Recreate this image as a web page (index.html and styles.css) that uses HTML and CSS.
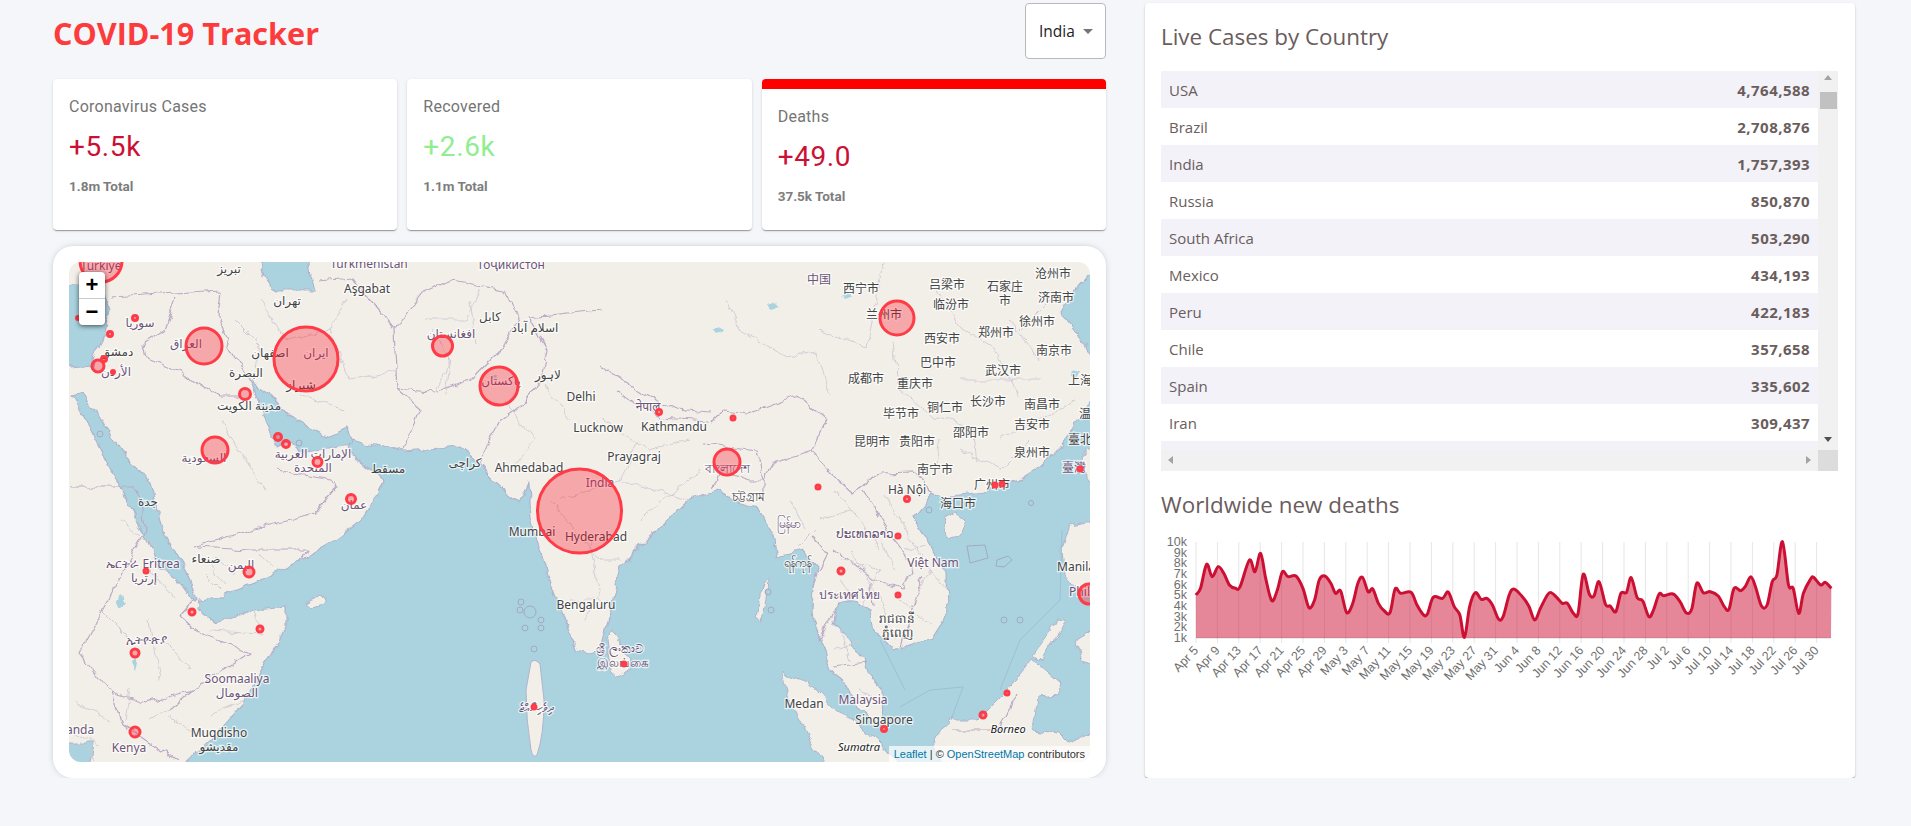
FILE: index.html
```html
<!DOCTYPE html>
<html lang="en">
<head>
  <meta charset="UTF-8">
  <title>COVID-19 Tracker</title>
  <link rel="stylesheet" href="styles.css">
</head>
<body>
  <div class="app">
    <div class="app-left">
      <div class="app-header">
        <h1>COVID-19 Tracker</h1>
        <div class="country-select">India <span class="select-arrow"></span></div>
      </div>

      <div class="app-stats">
        <div class="stat-card">
          <div class="stat-title">Coronavirus Cases</div>
          <div class="stat-number">+5.5k</div>
          <div class="stat-total">1.8m Total</div>
        </div>
        <div class="stat-card">
          <div class="stat-title">Recovered</div>
          <div class="stat-number stat-green">+2.6k</div>
          <div class="stat-total">1.1m Total</div>
        </div>
        <div class="stat-card stat-selected">
          <div class="stat-title">Deaths</div>
          <div class="stat-number">+49.0</div>
          <div class="stat-total">37.5k Total</div>
        </div>
      </div>

      <div class="map-card">
        <div class="map">
          <svg class="map-svg" viewBox="69 262 1021 500" width="1021" height="500">
            <defs>
              <filter id="rough" filterUnits="userSpaceOnUse" x="40" y="230" width="1080" height="560">
                <feTurbulence type="fractalNoise" baseFrequency="0.07" numOctaves="3" seed="7"/>
                <feDisplacementMap in="SourceGraphic" scale="9" xChannelSelector="R" yChannelSelector="G"/>
              </filter>
            </defs>
            <rect class="land" x="69" y="262" width="1021" height="500"/>

            <g filter="url(#rough)">
              <!-- seas -->
              <path class="water" d="M179 770L211 740L244 703L269 657L286 627L286 607L254 610L215 623L197 608L199 600L219 597L261 580L297 563L333 540L347 530L361 520L379 493L383 480L347 450L351 440L383 447L404 452L460 447L479 463L497 483L519 503L529 483L531 520L547 573L565 620L577 650L590 653L600 650L605 630L615 590L620 567L640 547L693 497L717 490L733 500L757 507L773 537L777 557L803 550L817 567L813 587L812 613L822 643L830 670L843 680L857 707L883 727L882 690L867 673L863 660L843 633L833 623L838 603L853 600L870 610L873 627L893 650L933 637L948 613L947 573L933 550L913 517L933 493L943 498L983 493L1033 473L1060 447L1083 413L1100 390L1100 770L905 770L880 743L830 770Z"/>
              <path class="water" d="M1100 262L1075 290L1062 313L1087 347L1100 367Z"/>
              <path class="water" d="M347 427L326 437L290 417L269 393L251 383L258 400L269 427L276 447L290 440L297 453L322 450L351 445Z"/>
              <path class="water" d="M72 395L94 437L122 490L144 535L160 568L183 585L195 602L197 600L183 565L165 535L147 478L119 450L97 412L82 392Z"/>
              <path class="water" d="M60 285L100 285L110 310L104 337L94 357L92 365L60 368Z"/>
              <path class="water" d="M258 255L265 283L277 290L315 290L311 277L308 255Z"/>
              <path class="water" d="M60 743L94 743L90 770L60 770Z"/>
              <path class="water thin" d="M118 600l6 -4l3 6l-5 4Z M131 663l3 -5l3 5l-2 8Z M256 405l4 -2l2 3l-4 3Z M490 372l8 3l-2 5l-5 -2Z M768 305l8 -3l3 6l-8 2Z M840 296l6 -5l4 5l-6 3Z M712 330l8 -3l3 5l-7 3Z M1073 370l8 2l-3 6l-6 -2Z"/>

              <!-- land sitting in the sea -->
              <path class="land-edge" d="M782 673L807 682L820 693L833 707L863 727L880 743L905 770L830 770L813 747L790 703Z"/>
              <path class="land-edge" d="M933 737L952 720L977 720L1007 690L1033 658L1062 683L1057 695L1038 697L1033 730L1057 733L1067 743L1100 730L1100 770L945 770L935 752Z"/>
              <path class="land-edge" d="M1070 525L1100 520L1100 595L1076 590L1065 575L1062 550Z"/>
              <path class="land-edge" d="M1033 655L1060 618L1067 620L1042 660Z"/>
              <path class="land-edge" d="M1075 640L1100 625L1100 665L1082 660Z"/>
              <path class="land-edge" d="M613 630L630 660L627 673L617 678L610 670L607 640Z"/>
              <path class="land-edge" d="M943 520L955 513L967 522L960 535L948 537Z"/>
              <path class="land-edge" d="M1084 450L1100 450L1100 487L1085 480Z"/>
              <path class="land-edge" d="M763 582L768 578L766 600L762 622L756 618Z"/>
              <path class="land-edge" d="M306 602L314 598L326 597L324 604L312 607Z"/>
            </g>

            <path class="land-edge" d="M531 662Q535 658 540 664L544 700Q544 735 537 755Q533 759 531 750Q526 720 526 690Z"/>
            <g class="atoll">
              <circle cx="521" cy="602" r="3"/><circle cx="520" cy="610" r="3"/><circle cx="530" cy="612" r="6"/>
              <circle cx="541" cy="620" r="3"/><circle cx="525" cy="628" r="3"/><circle cx="541" cy="628" r="3"/><circle cx="534" cy="649" r="3"/>
              <circle cx="100" cy="434" r="3"/><circle cx="299" cy="443" r="3"/><circle cx="768" cy="592" r="3"/><circle cx="771" cy="610" r="3"/>
              <path d="M967 546L985 545L988 558L970 563Z M997 560L1008 556L1012 560L1004 567L996 566Z"/>
              <circle cx="929" cy="510" r="3"/><circle cx="1031" cy="503" r="2.5"/><circle cx="1004" cy="620" r="3"/><circle cx="1020" cy="620" r="3"/>
            </g>
            <path class="sea-line" d="M900 707L930 690L963 687L951 720M880 640L905 690M1000 690L1020 640L1060 600L1062 530"/>

            <!-- country borders -->
            <g class="border" filter="url(#rough)">
              <path d="M147 357L183 373L219 397L240 397"/>
              <path d="M147 357L144 343L165 330L176 297"/>
              <path d="M219 317L229 347L245 373L251 383"/>
              <path d="M111 297L176 293L222 290L219 317"/>
              <path d="M394 330L397 390L419 410L404 450"/>
              <path d="M397 390L433 393L472 380L501 350L519 317L504 290"/>
              <path d="M394 330L422 293L451 280L504 290"/>
              <path d="M319 280L351 277L394 330"/>
              <path d="M479 463L497 423L519 407L540 383L547 350L529 317L600 310"/>
              <path d="M276 470L331 480L336 487L315 513L251 530L194 547"/>
              <path d="M69 487L136 487"/>
              <path d="M600 367L627 383L650 397L677 410L710 413"/>
              <path d="M713 420L723 410L750 413L797 395L827 420L813 450L827 470L853 493L880 473L913 472L933 493"/>
              <path d="M617 393L660 417L710 420"/>
              <path d="M703 443L757 450L763 480L750 480L720 470L713 487"/>
              <path d="M813 450L773 463L763 480L763 503"/>
              <path d="M813 537L827 553L817 573L813 587"/>
              <path d="M833 550L873 580L903 587L913 573L900 547L887 530L863 490"/>
              <path d="M870 583L872 607"/>
              <path d="M923 577L900 647"/>
              <path d="M115 587L79 653L111 693L147 703L194 690L249 653L190 627L179 617L194 600"/>
              <path d="M111 693L122 723L176 760"/>
              <path d="M169 710L194 690"/>
              <path d="M197 547L251 550L308 550L297 563"/>
              <path d="M838 603L820 640"/>
              <path d="M833 667L867 663"/>
              <path d="M953 730L1000 730L1017 693"/>
              <path d="M115 587L146 530L136 487"/>
            </g>
            <g class="border border-thin" filter="url(#rough)">
              <path d="M727 300L740 330L787 357L817 353L830 397"/>
              <path d="M817 330L867 347L883 263"/>
              <path d="M893 343L900 390L933 417L973 427L977 463"/>
              <path d="M1020 397L993 347L960 327L933 283"/>
              <path d="M211 630L261 633L254 610"/>
              <path d="M433 330L451 360L433 393"/>
              <path d="M470 300L476 345"/>
              <path d="M590 540L600 590L585 620"/>
              <path d="M560 500L620 480L640 440"/>
              <path d="M840 560L880 570L860 610"/>
              <path d="M905 530L930 570L915 600"/>
              <path d="M1000 440L1040 420L1075 400"/>
              <path d="M960 450L1000 470L1030 440"/>
              <path d="M220 420L265 490"/>
              <path d="M150 620L160 680"/>
              <path d="M205 560L225 585"/>
              <path d="M260 300L285 340L330 330L350 380"/>
              <path d="M330 330L345 300M350 380L395 370M300 395L345 410"/>
              <path d="M235 320L260 345L255 375"/>
              <path d="M425 320L465 320L480 290M445 395L450 355"/>
              <path d="M505 400L535 440L510 470M545 385L570 420"/>
              <path d="M600 420L650 450L690 440M620 480L690 500M640 520L700 470"/>
              <path d="M550 500L600 560L620 560M570 600L610 600"/>
              <path d="M840 580L855 600M850 550L880 600M880 540L895 570M905 550L925 545M860 520L880 550M885 495L905 530"/>
              <path d="M820 520L850 510M835 490L860 520M790 500L805 530M790 555L815 530"/>
              <path d="M930 570L947 590M900 600L930 625M880 600L895 640"/>
              <path d="M960 380L1040 380M1010 320L1040 360M1050 300L1020 330M940 440L935 470"/>
              <path d="M75 700L110 720M70 730L100 745M80 740L95 762M130 690L125 720M150 720L175 705"/>
              <path d="M120 520L160 550M100 610L130 640M165 640L190 670M150 570L175 600"/>
              <path d="M210 715L245 700M195 735L170 715"/>
              <path d="M205 575L220 590M215 555L235 575M260 555L275 565"/>
              <path d="M835 650L860 640M840 630L850 660M860 690L875 700"/>
            </g>

            <!-- place names -->
            <g class="labels">
              <text x="101" y="265" class="country">Türkiye</text>
              <text x="369" y="263" class="country">Türkmenistan</text>
              <text x="511" y="264" class="country">Тоҷикистон</text>
              <text x="229" y="268">تبريز</text>
              <text x="367" y="288">Aşgabat</text>
              <text x="287" y="300">تهران</text>
              <text x="140" y="322" class="country">سوريا</text>
              <text x="117" y="351">دمشق</text>
              <text x="116" y="371" class="country">الأردن</text>
              <text x="186" y="343" class="country">العراق</text>
              <text x="270" y="352">اصفهان</text>
              <text x="316" y="352" class="country">ايران</text>
              <text x="301" y="384">شيراز</text>
              <text x="246" y="372">البصرة</text>
              <text x="249" y="405">مدينة الكويت</text>
              <text x="204" y="457" class="country">السعودية</text>
              <text x="313" y="453" class="country">الإمارات العربية</text>
              <text x="313" y="467" class="country">المتحدة</text>
              <text x="388" y="468">مسقط</text>
              <text x="354" y="504" class="country">عمان</text>
              <text x="148" y="501">جدة</text>
              <text x="451" y="333" class="country">افغانستان</text>
              <text x="490" y="316">كابل</text>
              <text x="535" y="327">اسلام آباد</text>
              <text x="501" y="380" class="country">پاکستان</text>
              <text x="548" y="374">لاہور</text>
              <text x="581" y="396">Delhi</text>
              <text x="598" y="427">Lucknow</text>
              <text x="465" y="462">کراچی</text>
              <text x="529" y="467">Ahmedabad</text>
              <text x="532" y="531">Mumbai</text>
              <text x="600" y="482" class="country">India</text>
              <text x="596" y="536">Hyderabad</text>
              <text x="819" y="279" class="country">中国</text>
              <text x="861" y="288">西宁市</text>
              <text x="947" y="284">吕梁市</text>
              <text x="1005" y="286">石家庄</text>
              <text x="1005" y="300">市</text>
              <text x="1053" y="273">沧州市</text>
              <text x="1056" y="297">济南市</text>
              <text x="951" y="304">临汾市</text>
              <text x="884" y="314">兰州市</text>
              <text x="1037" y="321">徐州市</text>
              <text x="996" y="332">郑州市</text>
              <text x="942" y="338">西安市</text>
              <text x="1054" y="350">南京市</text>
              <text x="938" y="362">巴中市</text>
              <text x="1003" y="370">武汉市</text>
              <text x="1080" y="380">上海</text>
              <text x="866" y="378">成都市</text>
              <text x="915" y="383">重庆市</text>
              <text x="988" y="401">长沙市</text>
              <text x="1042" y="404">南昌市</text>
              <text x="945" y="407">铜仁市</text>
              <text x="901" y="413">毕节市</text>
              <text x="1085" y="413">温</text>
              <text x="1032" y="424">吉安市</text>
              <text x="971" y="432">邵阳市</text>
              <text x="872" y="441">昆明市</text>
              <text x="917" y="441">贵阳市</text>
              <text x="1080" y="439">臺北</text>
              <text x="1032" y="452">泉州市</text>
              <text x="935" y="469">南宁市</text>
              <text x="1074" y="467" class="country">臺灣</text>
              <text x="992" y="484">广州市</text>
              <text x="907" y="489">Hà Nội</text>
              <text x="958" y="503">海口市</text>
              <text x="648" y="406" class="country">नेपाल</text>
              <text x="674" y="426">Kathmandu</text>
              <text x="634" y="456">Prayagraj</text>
              <text x="727" y="468" class="country">বাংলাদেশ</text>
              <text x="748" y="496">চট্টগ্রাম</text>
              <text x="788" y="523" class="country">မြန်မာ</text>
              <text x="865" y="533" class="country">ປະເທດລາວ</text>
              <text x="797" y="562">ရန်ကုန်</text>
              <text x="933" y="562" class="country">Việt Nam</text>
              <text x="1076" y="566">Manila</text>
              <text x="1100" y="591" class="country">Philippines</text>
              <text x="849" y="594" class="country">ประเทศไทย</text>
              <text x="897" y="618">រាជធានី</text>
              <text x="897" y="632">ភ្នំពេញ</text>
              <text x="620" y="648" class="country">ශ්‍රී ලංකාව</text>
              <text x="623" y="662" class="country">இலங்கை</text>
              <text x="863" y="699" class="country">Malaysia</text>
              <text x="804" y="703">Medan</text>
              <text x="884" y="719">Singapore</text>
              <text x="1008" y="728" class="region">Borneo</text>
              <text x="859" y="746" class="region">Sumatra</text>
              <text x="586" y="604">Bengaluru</text>
              <text x="143" y="563" class="country">ኤርትራ Eritrea</text>
              <text x="144" y="577" class="country">إرتريا</text>
              <text x="206" y="558">صنعاء</text>
              <text x="241" y="564" class="country">اليمن</text>
              <text x="146" y="639" class="country">ኢትዮጵያ</text>
              <text x="237" y="678" class="country">Soomaaliya</text>
              <text x="237" y="692" class="country">الصومال</text>
              <text x="219" y="732">Muqdisho</text>
              <text x="219" y="746">مقديشو</text>
              <text x="129" y="747" class="country">Kenya</text>
              <text x="72" y="729" class="country">Uganda</text>
              <text x="536" y="707" class="country">ދިވެހިރާއްޖެ</text>
            </g>

            <!-- case circles -->
            <g class="cases">
              <circle cx="101" cy="261" r="21"/><circle cx="204" cy="346" r="18"/><circle cx="306" cy="359" r="32"/>
              <circle cx="442.500" cy="346" r="10"/><circle cx="499" cy="386" r="19"/><circle cx="215" cy="450" r="13"/>
              <circle cx="245" cy="394" r="5.500"/><circle cx="98" cy="366" r="6"/><circle cx="104" cy="359" r="2.500"/>
              <circle cx="113" cy="372" r="1.500"/><circle cx="110" cy="334" r="2.500"/><circle cx="135" cy="318" r="2.500"/>
              <circle cx="78" cy="318" r="1.500"/><circle cx="278" cy="437" r="3.500"/><circle cx="286" cy="444" r="3.500"/>
              <circle cx="317.500" cy="462" r="4.500"/><circle cx="351" cy="499" r="4.500"/><circle cx="579.500" cy="511" r="42"/>
              <circle cx="727" cy="462" r="13"/><circle cx="897" cy="318" r="17"/><circle cx="659" cy="412" r="2.500"/>
              <circle cx="733" cy="418" r="2"/><circle cx="818" cy="487" r="2"/><circle cx="907" cy="499" r="2.500"/>
              <circle cx="995" cy="485" r="2"/><circle cx="1002" cy="484" r="2"/><circle cx="1080" cy="469" r="2"/>
              <circle cx="898" cy="536" r="2"/><circle cx="249" cy="572" r="5"/><circle cx="146" cy="571" r="2"/>
              <circle cx="192" cy="612" r="3"/><circle cx="260" cy="629" r="3"/><circle cx="135" cy="653" r="4"/>
              <circle cx="135" cy="732" r="5"/><circle cx="534" cy="707" r="2"/><circle cx="841" cy="571" r="3"/>
              <circle cx="898" cy="595" r="2"/><circle cx="624" cy="664" r="2"/><circle cx="884" cy="729" r="2.500"/>
              <circle cx="1007" cy="693" r="2"/><circle cx="983" cy="715" r="3"/><circle cx="1089" cy="594" r="10"/>
            </g>
          </svg>

          <div class="zoom-control">
            <div class="zoom-btn">+</div>
            <div class="zoom-btn">−</div>
          </div>
          <div class="attribution"><a>Leaflet</a> | © <a>OpenStreetMap</a> contributors</div>
        </div>
      </div>
    </div>

    <div class="app-right">
      <h3>Live Cases by Country</h3>
      <div class="table-box">
        <div class="table-view">
          <table class="cases-table">
            <tr><td>USA</td><td><strong>4,764,588</strong></td></tr>
            <tr><td>Brazil</td><td><strong>2,708,876</strong></td></tr>
            <tr><td>India</td><td><strong>1,757,393</strong></td></tr>
            <tr><td>Russia</td><td><strong>850,870</strong></td></tr>
            <tr><td>South Africa</td><td><strong>503,290</strong></td></tr>
            <tr><td>Mexico</td><td><strong>434,193</strong></td></tr>
            <tr><td>Peru</td><td><strong>422,183</strong></td></tr>
            <tr><td>Chile</td><td><strong>357,658</strong></td></tr>
            <tr><td>Spain</td><td><strong>335,602</strong></td></tr>
            <tr><td>Iran</td><td><strong>309,437</strong></td></tr>
            <tr><td></td><td></td></tr>
          </table>
        </div>
        <div class="vbar">
          <span class="arrow-up"></span>
          <span class="vbar-thumb"></span>
          <span class="arrow-down"></span>
        </div>
        <div class="hbar">
          <span class="arrow-left"></span>
          <span class="arrow-right"></span>
        </div>
        <div class="bar-corner"></div>
      </div>
      <h3 class="chart-title">Worldwide new deaths</h3>
      <svg id="chart" class="chart" width="677" height="150"></svg>
    </div>
  </div>

  <script src="script.js"></script>
</body>
</html>
```

FILE: styles.css
```css
* {
  box-sizing: border-box;
}
body {
  margin: 0;
  background: #f5f6fa;
  font-family: Roboto, sans-serif;
  overflow: hidden;
}
.app {
  display: grid;
  grid-template-columns: 1053px 710px;
  gap: 39px;
  padding: 3px 56px 0 53px;
}

/* left side */
.app-header {
  display: flex;
  justify-content: space-between;
  height: 76px;
}
.app-header h1 {
  margin: 10px 0 0;
  font-family: "Open Sans", sans-serif;
  font-size: 30.6px;
  line-height: 40px;
  font-weight: 700;
  color: #fc3c3c;
}
.country-select {
  display: flex;
  align-items: center;
  gap: 8px;
  width: 81px;
  height: 56px;
  padding-left: 13px;
  background: #fff;
  border: 1px solid #b9b9b9;
  border-radius: 4px;
  font-family: "Open Sans", sans-serif;
  font-size: 15.5px;
  color: #222;
}
.select-arrow {
  border-left: 5px solid transparent;
  border-right: 5px solid transparent;
  border-top: 5px solid #757575;
}
.app-stats {
  display: grid;
  grid-template-columns: repeat(3, 1fr);
  gap: 10px;
  height: 151px;
}
.stat-card {
  padding: 16px;
  background: #fff;
  border-radius: 4px;
  box-shadow: 0 2px 1px -1px rgba(0,0,0,0.2), 0 1px 1px 0 rgba(0,0,0,0.14), 0 1px 3px 0 rgba(0,0,0,0.12);
}
.stat-selected {
  border-top: 10px solid #f00;
}
.stat-title {
  font-size: 16px;
  line-height: 24px;
  letter-spacing: 0.25px;
  color: #757575;
}
.stat-number {
  margin-top: 10px;
  font-size: 28px;
  line-height: 35px;
  letter-spacing: 0.6px;
  color: #cc1034;
}
.stat-green {
  color: #90ee90;
}
.stat-total {
  margin-top: 12px;
  font-size: 13.5px;
  line-height: 20px;
  font-weight: 700;
  color: #7d7d7d;
}
.map-card {
  margin-top: 16px;
  height: 532px;
  padding: 16px;
  background: #fff;
  border-radius: 20px;
  box-shadow: 0 0 8px -4px rgba(0,0,0,0.5);
}
.map {
  position: relative;
  height: 500px;
  overflow: hidden;
  border-radius: 12px;
}
.map-svg {
  display: block;
}
.land {
  fill: #f2efe9;
}
.land-edge {
  fill: #f2efe9;
  stroke: #afb4cc;
  stroke-width: 1;
}
.water {
  fill: #aad3df;
  stroke: #afb4cc;
  stroke-width: 1.2;
  stroke-linejoin: round;
}
.thin {
  stroke: none;
}
.atoll {
  fill: none;
  stroke: #a3a9c4;
  stroke-width: 1;
}
.sea-line {
  fill: none;
  stroke: #9fbfd3;
  stroke-width: 1;
}
.border {
  fill: none;
  stroke: #bba9c4;
  stroke-width: 1.2;
  stroke-linejoin: round;
}
.border-thin {
  stroke: #d0c8d2;
  stroke-width: 0.9;
}
.labels text {
  font-family: "Noto Sans", "DejaVu Sans", "Noto Sans CJK SC", sans-serif;
  font-size: 12px;
  fill: #444;
  text-anchor: middle;
  dominant-baseline: central;
  stroke: rgba(255,255,255,0.7);
  stroke-width: 2.5px;
  paint-order: stroke;
}
.labels .country {
  fill: #6d5577;
}
.labels .region {
  fill: #222;
  font-style: italic;
  font-size: 11px;
}
.cases circle {
  fill: rgba(255,20,40,0.33);
  stroke: #ff3b47;
  stroke-width: 3;
}
.zoom-control {
  position: absolute;
  top: 10px;
  left: 10px;
  width: 26px;
  border-radius: 4px;
  background: #fff;
  box-shadow: 0 1px 5px rgba(0,0,0,0.65);
}
.zoom-btn {
  height: 26px;
  font-family: "Liberation Sans", sans-serif;
  font-size: 22px;
  line-height: 26px;
  font-weight: 700;
  text-align: center;
  color: #000;
}
.zoom-btn + .zoom-btn {
  border-top: 1px solid #ccc;
  height: 27px;
}
.attribution {
  position: absolute;
  right: 0;
  bottom: 0;
  padding: 0 5px;
  background: rgba(255,255,255,0.7);
  font-family: "Liberation Sans", sans-serif;
  font-size: 11px;
  line-height: 16px;
  color: #333;
}
.attribution a {
  color: #0078a8;
}

/* right side */
.app-right {
  height: 775px;
  padding: 0 17px 0 16px;
  background: #fff;
  border-radius: 4px;
  box-shadow: 0 2px 2px -1px rgba(0,0,0,0.3), 0 1px 1px 0 rgba(0,0,0,0.14), 0 1px 3px 0 rgba(0,0,0,0.12);
}
.app-right h3 {
  margin: 0;
  padding-top: 17px;
  font-family: "Open Sans", sans-serif;
  font-size: 22.4px;
  line-height: 33px;
  height: 68px;
  font-weight: 400;
  color: #6a5d5d;
}
.table-box {
  display: grid;
  grid-template-columns: 657px 20px;
  grid-template-rows: 379px 21px;
}
.table-view {
  overflow: hidden;
}
.cases-table {
  width: 100%;
  border-collapse: collapse;
  font-family: "Open Sans", sans-serif;
  font-size: 15px;
  color: #6a5d5d;
}
.cases-table strong {
  letter-spacing: 0.45px;
}
.cases-table tr {
  height: 37px;
}
.cases-table tr:nth-child(odd) {
  background: #f3f2f8;
}
.cases-table td {
  padding: 0 8px;
}
.cases-table td:last-child {
  text-align: right;
}
.vbar {
  position: relative;
  background: #f1f1f1;
}
.vbar-thumb {
  position: absolute;
  top: 21px;
  left: 2px;
  width: 17px;
  height: 17px;
  background: #c1c1c1;
}
.arrow-up, .arrow-down, .arrow-left, .arrow-right {
  position: absolute;
  width: 0;
  height: 0;
  border: 4px solid transparent;
}
.arrow-up {
  top: 4px;
  left: 6px;
  border-bottom: 5px solid #a3a3a3;
  border-top: 0;
}
.arrow-down {
  bottom: 8px;
  left: 6px;
  border-top: 5px solid #505050;
  border-bottom: 0;
}
.hbar {
  position: relative;
  background: #f1f1f1;
}
.arrow-left {
  left: 7px;
  top: 6px;
  border-right: 5px solid #a3a3a3;
  border-left: 0;
}
.arrow-right {
  right: 7px;
  top: 6px;
  border-left: 5px solid #a3a3a3;
  border-right: 0;
}
.bar-corner {
  background: #dcdcdc;
}
.app-right .chart-title {
  height: 59px;
}
.chart {
  display: block;
}
.chart-grid {
  stroke: rgba(0,0,0,0.1);
  stroke-width: 1;
}
.chart-base {
  stroke: rgba(0,0,0,0.08);
  stroke-width: 2;
}
.chart-area {
  fill: rgba(204,16,52,0.5);
  stroke: none;
}
.chart-line {
  fill: none;
  stroke: #cc1034;
  stroke-width: 3;
}
.chart-tick {
  font-family: "Liberation Sans", sans-serif;
  font-size: 12.5px;
  fill: #707070;
}
```

FILE: script.js
```js
// Draws the worldwide deaths chart, with the same look as the Chart.js one
const svg = document.getElementById('chart');
const NS = 'http://www.w3.org/2000/svg';

const PLOT_LEFT = 35;
const PLOT_RIGHT = 670;
const PLOT_TOP = 12;
const PLOT_BOTTOM = 108;

// x, y points of the curve in a 1568 wide / 3x high drawing
const raw = [[120,225],[130,205],[143,133],[155,170],[168,140],[180,160],[192,195],[205,205],[215,200],[235,120],[247,155],[259,100],[270,175],[283,242],[295,210],[306,155],[318,170],[335,168],[350,205],[363,263],[375,240],[385,180],[397,168],[410,190],[420,220],[431,213],[444,278],[457,250],[468,190],[478,172],[490,215],[500,207],[512,250],[525,273],[537,278],[548,207],[560,220],[582,217],[595,255],[608,283],[617,283],[630,232],[650,235],[662,216],[675,260],[687,285],[697,352],[708,260],[720,218],[733,238],[745,235],[757,255],[770,297],[780,290],[793,225],[803,207],[820,228],[835,258],[848,300],[860,265],[875,225],[883,218],[895,232],[907,250],[918,250],[931,280],[941,280],[952,163],[965,222],[975,228],[986,185],[1000,253],[1010,258],[1022,275],[1033,220],[1045,217],[1055,173],[1068,233],[1080,243],[1093,290],[1103,270],[1115,222],[1125,227],[1145,222],[1160,245],[1173,278],[1185,268],[1196,190],[1210,218],[1225,215],[1242,228],[1255,260],[1265,268],[1276,205],[1290,212],[1300,200],[1312,170],[1322,200],[1335,258],[1347,255],[1358,185],[1368,165],[1380,65],[1393,195],[1403,205],[1415,280],[1425,220],[1440,178],[1447,172],[1462,195],[1472,187],[1485,205]];
const points = raw.map(p => [p[0] / 2.148 - 21, p[1] / 3 - 10]);

const labels = ['Apr 5','Apr 9','Apr 13','Apr 17','Apr 21','Apr 25','Apr 29','May 3','May 7','May 11','May 15','May 19','May 23','May 27','May 31','Jun 4','Jun 8','Jun 12','Jun 16','Jun 20','Jun 24','Jun 28','Jul 2','Jul 6','Jul 10','Jul 14','Jul 18','Jul 22','Jul 26','Jul 30'];

function add(tag, attrs, text) {
  const el = document.createElementNS(NS, tag);
  Object.keys(attrs).forEach(k => el.setAttribute(k, attrs[k]));
  if (text) el.textContent = text;
  svg.appendChild(el);
  return el;
}

// smooth line through the points
function curve(pts) {
  let d = `M${pts[0][0]} ${pts[0][1]}`;
  for (let i = 0; i < pts.length - 1; i++) {
    const p0 = pts[i - 1] || pts[i];
    const p1 = pts[i];
    const p2 = pts[i + 1];
    const p3 = pts[i + 2] || p2;
    const c1x = p1[0] + (p2[0] - p0[0]) / 6;
    const c1y = p1[1] + (p2[1] - p0[1]) / 6;
    const c2x = p2[0] - (p3[0] - p1[0]) / 6;
    const c2y = p2[1] - (p3[1] - p1[1]) / 6;
    d += `C${c1x} ${c1y} ${c2x} ${c2y} ${p2[0]} ${p2[1]}`;
  }
  return d;
}

// y axis
for (let i = 1; i <= 10; i++) {
  const y = PLOT_BOTTOM - (i - 1) * (PLOT_BOTTOM - PLOT_TOP) / 9;
  add('text', { x: PLOT_LEFT - 9, y: y + 4, 'text-anchor': 'end', class: 'chart-tick' }, i + 'k');
}

// x axis
const step = 21.4;
labels.forEach((label, i) => {
  const x = PLOT_LEFT + i * step;
  add('line', { x1: x, x2: x, y1: PLOT_TOP, y2: PLOT_BOTTOM + 5, class: 'chart-grid' });
  add('text', {
    x: x + 3,
    y: PLOT_BOTTOM + 13,
    'text-anchor': 'end',
    transform: `rotate(-47 ${x + 3} ${PLOT_BOTTOM + 13})`,
    class: 'chart-tick'
  }, label);
});
add('line', { x1: PLOT_LEFT, x2: PLOT_RIGHT, y1: PLOT_BOTTOM, y2: PLOT_BOTTOM, class: 'chart-base' });

const line = curve(points);
add('path', { d: `${line}L${PLOT_RIGHT} ${PLOT_BOTTOM}L${PLOT_LEFT} ${PLOT_BOTTOM}Z`, class: 'chart-area' });
add('path', { d: line, class: 'chart-line' });
```
